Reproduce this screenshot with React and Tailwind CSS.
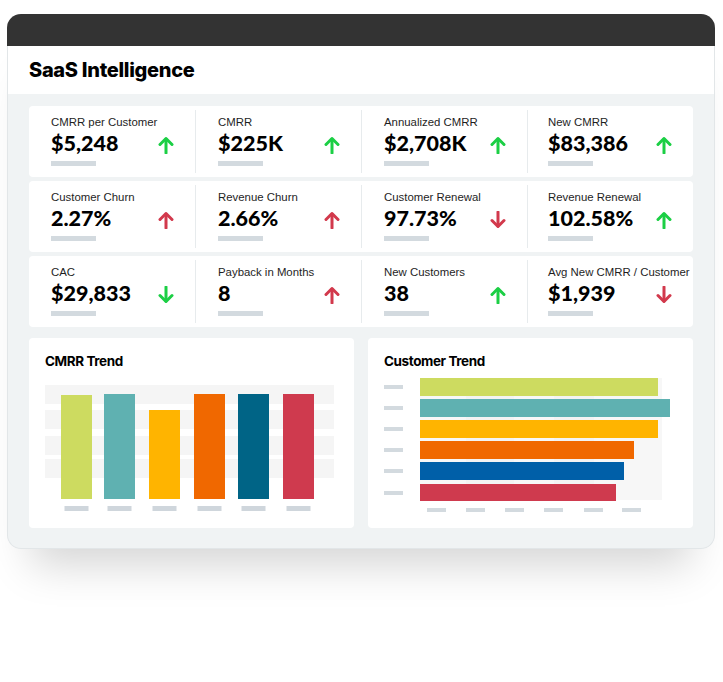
const kpis = [
  [
    { label: 'CMRR per Customer', value: '$5,248', dir: 'up', good: true },
    { label: 'CMRR', value: '$225K', dir: 'up', good: true },
    { label: 'Annualized CMRR', value: '$2,708K', dir: 'up', good: true },
    { label: 'New CMRR', value: '$83,386', dir: 'up', good: true },
  ],
  [
    { label: 'Customer Churn', value: '2.27%', dir: 'up', good: false },
    { label: 'Revenue Churn', value: '2.66%', dir: 'up', good: false },
    { label: 'Customer Renewal', value: '97.73%', dir: 'down', good: false },
    { label: 'Revenue Renewal', value: '102.58%', dir: 'up', good: true },
  ],
  [
    { label: 'CAC', value: '$29,833', dir: 'down', good: true },
    { label: 'Payback in Months', value: '8', dir: 'up', good: false },
    { label: 'New Customers', value: '38', dir: 'up', good: true },
    { label: 'Avg New CMRR / Customer', value: '$1,939', dir: 'down', good: false },
  ],
]

function Arrow({ dir, good }) {
  const color = good ? '#1ccf45' : '#d2394c'
  return (
    <svg width="16" height="18" viewBox="0 0 16 18" className={dir === 'down' ? 'rotate-180' : ''}>
      <path d="M8 17V3" stroke={color} strokeWidth="3" fill="none" strokeLinecap="round" />
      <path d="M2 8.5 8 2.5l6 6" stroke={color} strokeWidth="3" fill="none" strokeLinecap="round" strokeLinejoin="round" />
    </svg>
  )
}

function KpiRow({ items }) {
  return (
    <div className="grid grid-cols-4 rounded-[4px] bg-white py-[4px] h-[71px]">
      {items.map((k, i) => (
        <div
          key={k.label}
          className={'flex min-w-0 items-center pr-[21px] ' + (i > 0 ? 'border-l border-[#e7ebed] ' : '') + (i === 3 ? 'pl-[20px]' : 'pl-[22px]')}
        >
          <div className="flex min-w-0 flex-1 flex-col self-start pt-[4px]">
            <span className="font-['Liberation_Sans',Arial,sans-serif] text-[11.4px] leading-[16px] text-[#1e1e1e] whitespace-nowrap">{k.label}</span>
            <span className="font-['Lato','Inter',sans-serif] text-[21.5px] leading-[26px] font-black text-black">{k.value}</span>
            <span className="mt-[5px] h-[5px] w-[45px] bg-[#d3dadf]" />
          </div>
          <div className="mt-[6px] shrink-0">
            <Arrow dir={k.dir} good={k.good} />
          </div>
        </div>
      ))}
    </div>
  )
}

const colors = ['#cddb60', '#5fb1b1', '#ffb400', '#f06800', '#006486', '#cf3a4e']

function CmrrChart() {
  const bars = [
    { x: 16, top: 12 },
    { x: 59, top: 11 },
    { x: 104, top: 27 },
    { x: 149, top: 11 },
    { x: 193, top: 11 },
    { x: 238, top: 11 },
  ]
  return (
    <svg width="290" height="130" viewBox="0 0 290 130">
      {[2, 27, 53, 76].map((y) => (
        <rect key={y} x="0" y={y} width="289" height="19" fill="#f5f5f5" />
      ))}
      {bars.map((b, i) => (
        <g key={i}>
          <rect x={b.x} y={b.top} width="31" height={116 - b.top} fill={colors[i]} />
          <rect x={b.x + 3.5} y="123" width="24" height="5" fill="#cfd6dc" />
        </g>
      ))}
    </svg>
  )
}

function CustomerChart() {
  const ends = [274, 286, 274, 250, 240, 232]
  const ys = [2, 23, 44, 65, 86, 108]
  const hbar = ['#cddb60', '#5fb1b1', '#ffb400', '#f06800', '#005fa8', '#cf3a4e']
  return (
    <svg width="290" height="140" viewBox="0 0 290 140">
      <rect x="36" y="2" width="242" height="122" fill="#f7f7f7" />
      <rect x="82" y="2" width="48" height="122" fill="#f3f3f3" />
      <rect x="170" y="2" width="40" height="122" fill="#f3f3f3" />
      {ys.map((y, i) => (
        <g key={i}>
          <rect x="0" y={y + 7} width="19" height="4" fill="#d3dadf" />
          <rect x="36" y={y} width={ends[i] - 36} height={i === 5 ? 17 : 18} fill={hbar[i]} />
        </g>
      ))}
      {[43, 82, 121, 160, 200, 238].map((x) => (
        <rect key={x} x={x} y="132" width="19" height="4" fill="#d3dadf" />
      ))}
    </svg>
  )
}

export default function App() {
  return (
    <div className="min-h-[682px] w-[723px] bg-white pt-[14px] pl-[7px]" style={{ fontFamily: 'Inter, "Liberation Sans", sans-serif' }}>
      <div className="w-[708px] rounded-[14px] shadow-[0_40px_40px_-24px_rgba(0,0,0,0.17)]">
        <div className="h-[32px] rounded-t-[14px] bg-[#333333]" />
        <div className="flex h-[48px] items-center border-x border-[#e2e6e8] bg-white px-[21px]">
          <h1 className="text-[20px] font-extrabold tracking-[-0.3px] text-black">SaaS Intelligence</h1>
        </div>
        <div className="rounded-b-[14px] border-x border-b border-[#e2e6e8] bg-[#f0f3f4] px-[21px] pt-[12px] pb-[20px]">
          <div className="flex flex-col gap-[4px]">
            {kpis.map((row, i) => (
              <KpiRow key={i} items={row} />
            ))}
          </div>
          <div className="mt-[11px] grid grid-cols-2 gap-[14px]">
            <div className="h-[190px] rounded-[4px] bg-white pl-[16px] pt-[13px]">
              <h2 className="text-[13.5px] leading-[20px] font-bold tracking-[-0.4px] text-black">CMRR Trend</h2>
              <div className="mt-[12px]">
                <CmrrChart />
              </div>
            </div>
            <div className="h-[190px] rounded-[4px] bg-white pl-[16px] pt-[13px]">
              <h2 className="text-[13.5px] leading-[20px] font-bold tracking-[-0.4px] text-black">Customer Trend</h2>
              <div className="mt-[5px]">
                <CustomerChart />
              </div>
            </div>
          </div>
        </div>
      </div>
    </div>
  )
}
